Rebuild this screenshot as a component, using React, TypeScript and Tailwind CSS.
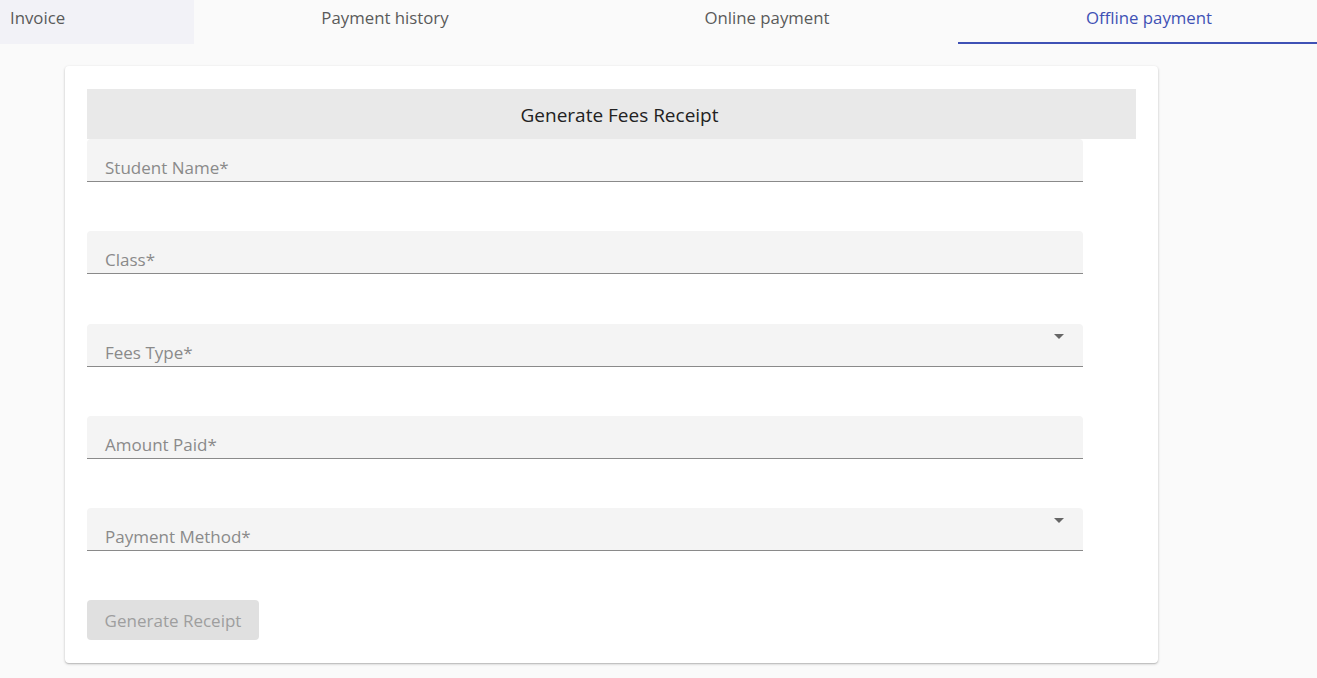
import React from 'react';

const tabs = ['Invoice', 'Payment history', 'Online payment', 'Offline payment'];

const fields = [
    { label: 'Student Name*', select: false, gap: 'mt-0' },
    { label: 'Class*', select: false, gap: 'mt-[49px]' },
    { label: 'Fees Type*', select: true, gap: 'mt-[50px]' },
    { label: 'Amount Paid*', select: false, gap: 'mt-[49px]' },
    { label: 'Payment Method*', select: true, gap: 'mt-[49px]' },
];

const Caret = () => (
    <svg width="10" height="5" viewBox="0 0 10 5" className="absolute right-[19px] top-[10px]">
        <path d="M0 0h10L5 5z" fill="#666" />
    </svg>
);

const App: React.FC = () => {
    return (
        <div
            className="w-[1317px] h-[678px] bg-[#fafafa] overflow-hidden"
            style={{ fontFamily: '"Open Sans", "Noto Sans", sans-serif' }}
        >
            {/* Tabs */}
            <div className="flex h-[44px] text-[16.8px] leading-[22px]">
                <div className="w-[194px] shrink-0 h-[44px] bg-[#f2f2f7] pl-[10px] pt-[7px] text-[#5a5a5a]">
                    {tabs[0]}
                </div>
                <div className="w-[382px] shrink-0 pt-[7px] text-center text-[#5a5a5a]">
                    {tabs[1]}
                </div>
                <div className="w-[382px] shrink-0 pt-[7px] text-center text-[#5a5a5a]">
                    {tabs[2]}
                </div>
                <div className="w-[382px] shrink-0 pt-[7px] text-center text-[#3f51b5] border-b-2 border-[#3f51b5]">
                    {tabs[3]}
                </div>
            </div>

            {/* Card */}
            <div className="ml-[65px] mt-[22px] w-[1093px] h-[597px] bg-white rounded-[4px] shadow-[0_1px_3px_rgba(0,0,0,0.2),0_1px_1px_rgba(0,0,0,0.12)] px-[22px] pt-[23px]">
                <div className="h-[50px] bg-[#e9e9e9] flex items-center justify-center pt-[3px] pl-[16px] text-[19px] text-[#222]">
                    Generate Fees Receipt
                </div>

                <div className="flex flex-col w-[996px]">
                    {fields.map((f) => (
                        <div
                            key={f.label}
                            className={`${f.gap} relative h-[43px] bg-[#f4f4f4] rounded-t-[4px] border-b border-[#8a8a8a] flex items-end pl-[18px] pb-[1px] text-[17px] text-[#8a8a8a]`}
                        >
                            {f.label}
                            {f.select && <Caret />}
                        </div>
                    ))}
                </div>

                <button className="mt-[49px] w-[172px] h-[40px] bg-[#e0e0e0] rounded-[4px] pt-[1px] text-[17px] text-[#9e9e9e]">
                    Generate Receipt
                </button>
            </div>
        </div>
    );
};

export default App;
